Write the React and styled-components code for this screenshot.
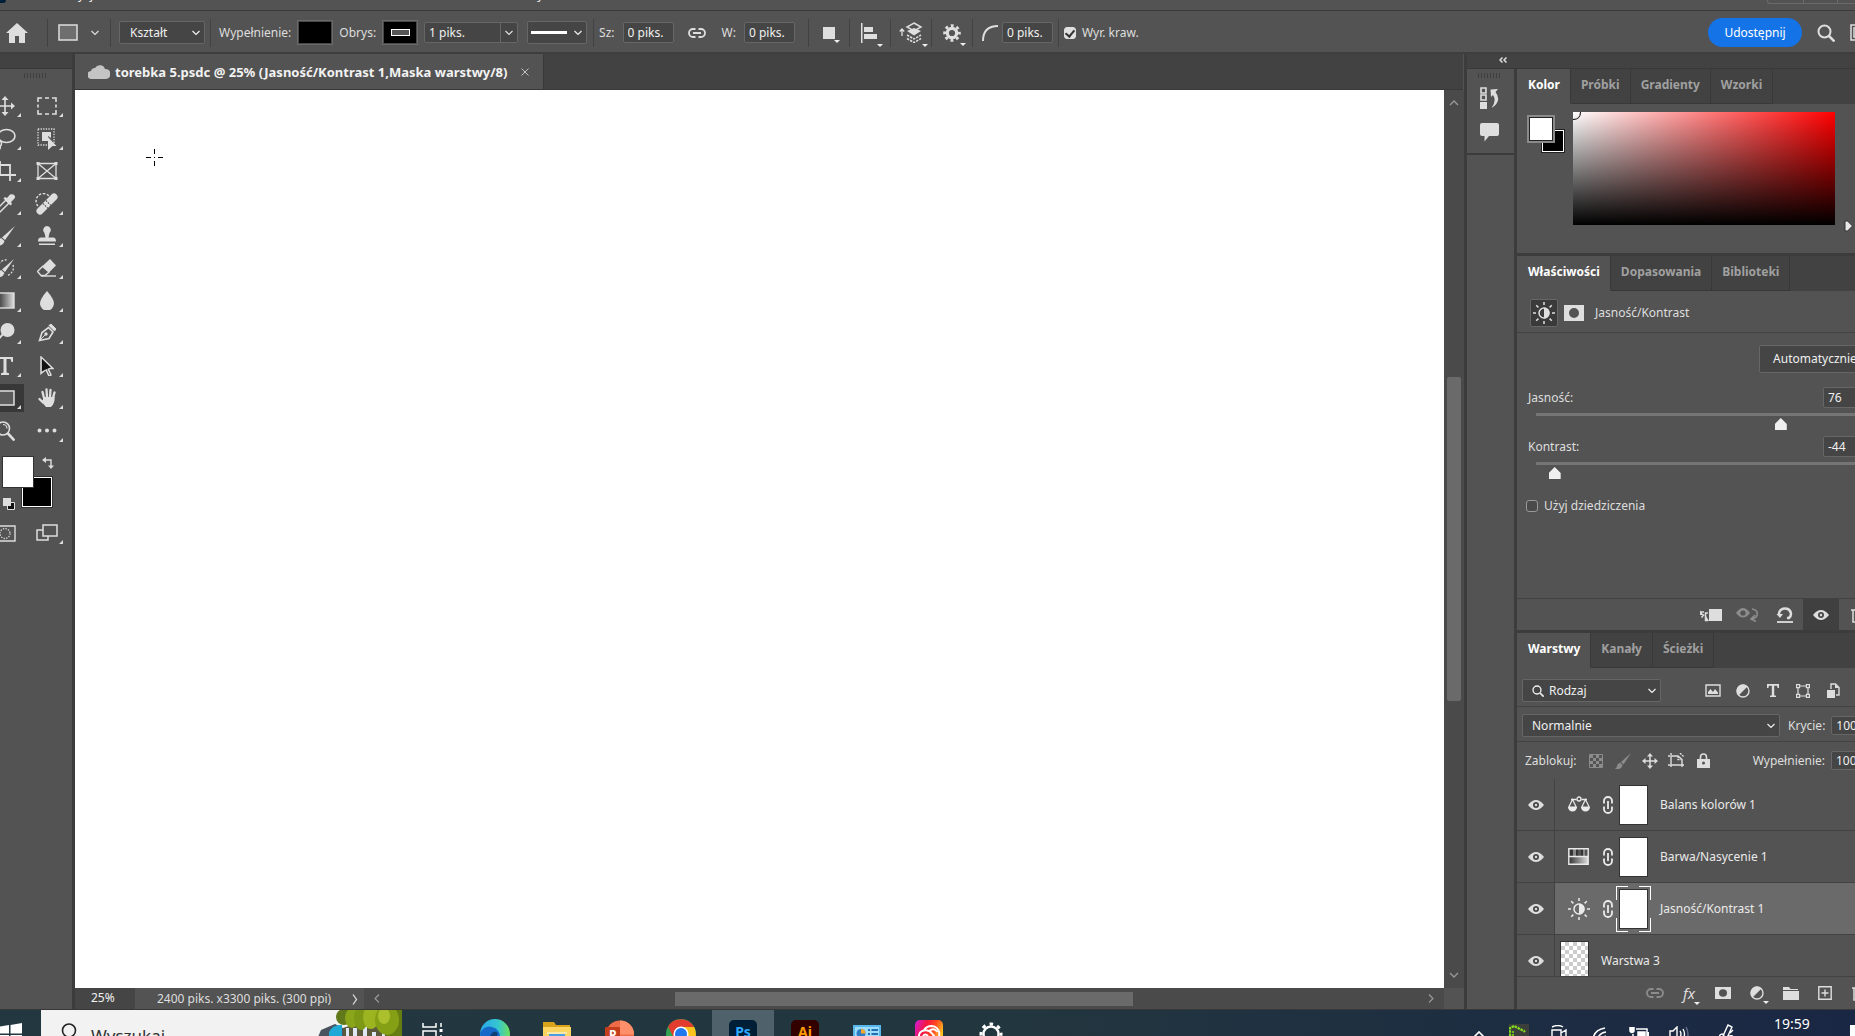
import styled, { createGlobalStyle, css } from "styled-components";

const GlobalStyle = createGlobalStyle`
  * {
    box-sizing: border-box;
  }
  body {
    margin: 0;
    background: #535353;
    overflow: hidden;
  }
  body, button, input, select {
    font-family: "Noto Sans", "Open Sans", sans-serif;
    font-size: 12px;
    line-height: 16px;
    color: #dedede;
  }
  button {
    background: none;
    border: 0;
    padding: 0;
  }
  svg {
    display: block;
    flex: none;
  }
`;

/* ---------- icons ---------- */

const line = { fill: "none", stroke: "currentColor" };

const icons = {
  home: [22, 20, <path d="M11 0 22 10h-3v10h-6v-7H9v7H3V10H0z" fill="currentColor" />],
  shape: [20, 17, <rect x="1" y="1" width="18" height="15" fill="#6e6e6e" stroke="currentColor" strokeWidth="1.5" />],
  chevron: [8, 6, <path d="m.5 1 3.500 3.500L7.500 1" {...line} strokeWidth="1.200" />],
  up: [10, 6, <path d="m1 5 4-4 4 4" {...line} strokeWidth="1.300" />],
  down: [10, 6, <path d="m1 1 4 4 4-4" {...line} strokeWidth="1.300" />],
  left: [6, 9, <path d="m5 .5-4 4 4 4" {...line} strokeWidth="1.200" />],
  right: [6, 9, <path d="m1 .5 4 4-4 4" {...line} strokeWidth="1.200" />],
  more: [6, 11, <path d="m1 .5 3.500 5L1 10.500" {...line} strokeWidth="1.300" />],
  collapse: [8, 6, <path d="M3.500.5 1 3l2.500 2.500M7.500.5 5 3l2.500 2.500" {...line} strokeWidth="1.500" />],
  link: [18, 10, <g {...line} strokeWidth="1.800"><path d="M7.500 1H5a4 4 0 0 0 0 8h2.500M10.500 1H13a4 4 0 0 1 0 8h-2.500M5 5h8" /></g>],
  linkV: [10, 18, <g {...line} strokeWidth="1.800"><path d="M1 7.500V5a4 4 0 0 1 8 0v2.500M1 10.500V13a4 4 0 0 0 8 0v-2.500M5 5v8" /></g>],
  square: [12, 12, <rect width="12" height="12" fill="currentColor" />],
  alignLeft: [17, 20, <path d="M0 0h1.500v20H0zM3 4h9v5H3zM3 11h13v5H3z" fill="currentColor" />],
  arrange: [24, 21, (
    <g>
      <path d="M3 14V8M.8 9.500 3 7l2.200 2.500" {...line} strokeWidth="1.300" />
      <path d="m15 1 7 4-7 4-7-4z" {...line} strokeWidth="1.500" />
      <path d="m8 9 7-3 7 3-7 4.500z" fill="currentColor" />
      <path d="m8 13 7 4 7-4M8 16.500l7 4 7-4" {...line} strokeWidth="1.500" strokeDasharray="2.500 1" />
    </g>
  )],
  gear: [18, 18, (
    <g {...line}>
      <circle cx="9" cy="9" r="4.700" strokeWidth="3.200" />
      <circle cx="9" cy="9" r="7.400" strokeWidth="2.800" strokeDasharray="2.900 2.912" strokeDashoffset="1.450" />
    </g>
  )],
  corner: [16, 16, <path d="M1 16C1 6 6 1 16 1" {...line} strokeWidth="2" />],
  search: [18, 18, <g {...line}><circle cx="7.500" cy="7.500" r="6" strokeWidth="2" /><path d="m12 12 5.500 5.500" strokeWidth="2.500" /></g>],
  frame: [18, 17, <path d="M1 1h16v15H1zM4 4h6v9H4z" {...line} strokeWidth="1.500" />],
  cloud: [22, 16, <path d="M4 15a4 4 0 0 1-1-8 4 4 0 0 1 4-3 5.500 5.500 0 0 1 10 1 5 5 0 0 1 1 10z" fill="currentColor" />],
  close: [8, 8, <path d="m.5.5 7 7m0-7-7 7" {...line} />],
  eye: [16, 10, (
    <g>
      <path d="M0 5q8-10 16 0Q8 15 0 5z" fill="currentColor" />
      <circle cx="8" cy="5" r="3" fill="#484848" />
      <circle cx="8" cy="5" r="1.200" fill="currentColor" />
    </g>
  )],
  brightness: [22, 22, (
    <g>
      <circle cx="11" cy="11" r="5" {...line} strokeWidth="1.500" />
      <path d="M11 5.500a5.500 5.500 0 0 1 0 11z" fill="currentColor" />
      <path d="M11 0v3M11 19v3M0 11h3M19 11h3M3.200 3.200l2.200 2.200M16.600 16.600l2.200 2.200M3.200 18.800l2.200-2.200M16.600 5.400l2.200-2.200" {...line} strokeWidth="1.500" />
    </g>
  )],
  mask: [20, 16, <path d="M0 0h20v16H0zM10 3a5 5 0 1 0 0 10 5 5 0 0 0 0-10z" fill="currentColor" fillRule="evenodd" />],
  clip: [23, 14, (
    <g>
      <path d="M10 1h13v12H10z" fill="currentColor" />
      <path d="M1 4h4M2.500 9.500 5 6.500M9 5H6.500v7.500H9" {...line} strokeWidth="1.500" />
      <path d="M1 7V2.500L4.500 7zM7 8l3 5H6z" fill="currentColor" />
    </g>
  )],
  previous: [23, 14, (
    <g>
      <path d="M0 5q7-10 14 0-7 9-14 0z" fill="currentColor" />
      <circle cx="7" cy="5" r="2.600" fill="#535353" />
      <path d="M16 1c7 1 7 8 0 10M19 7l-4 4 5 2.500" {...line} strokeWidth="1.600" />
    </g>
  )],
  reset: [18, 16, (
    <g {...line}>
      <path d="M3 7.500A6 5.500 0 1 1 13 11h-2" strokeWidth="2.500" />
      <path d="M1 15h16" strokeWidth="1.800" />
      <path d="M.5 7h6.500l-3 4z" fill="currentColor" stroke="none" />
    </g>
  )],
  trash: [14, 16, <path d="M0 3h14M5 3V1h4v2M2 3v12h10V3M5 6v7M9 6v7" {...line} strokeWidth="1.500" />],
  picture: [16, 13, (
    <g>
      <path d="M1 1h14v11H1z" {...line} strokeWidth="1.400" />
      <path d="M3 10V8l2.500-3 2.500 3 2-3 3 3.500V10z" fill="currentColor" />
    </g>
  )],
  adjust: [14, 14, (
    <g>
      <circle cx="7" cy="7" r="6" {...line} strokeWidth="1.400" />
      <path d="M2.500 11.500a6.300 6.300 0 0 1 0-9 6.300 6.300 0 0 1 9 0z" fill="currentColor" />
    </g>
  )],
  type: [12, 13, <path d="M0 0h12v4h-1.300L10 1.800H7.200v9.400l1.800.5V13H3v-1.300l1.800-.5V1.800H2L1.300 4H0z" fill="currentColor" />],
  vector: [14, 14, (
    <g {...line} strokeWidth="1.200">
      <path d="M2 2h10v10H2z" />
      <g fill="#535353"><path d="M.6.6h3v3h-3zM10.400.6h3v3h-3zM.6 10.400h3v3h-3zM10.400 10.400h3v3h-3z" /></g>
    </g>
  )],
  smart: [13, 15, (
    <g>
      <path d="M4 6V1h4.500L12 4.500V12H9" {...line} strokeWidth="1.400" />
      <path d="M8 1v4h4M0 7h8v8H0z" fill="currentColor" />
    </g>
  )],
  checker: [14, 14, (
    <g>
      <path d="M.5.5h13v13H.5z" {...line} />
      <path d="M1 1h3v3H1zM7 1h3v3H7zM4 4h3v3H4zM10 4h3v3h-3zM1 7h3v3H1zM7 7h3v3H7zM4 10h3v3H4zM10 10h3v3h-3z" fill="currentColor" />
    </g>
  )],
  smallBrush: [16, 16, <path d="M16 0 8.500 11.500 6 9zM5 9.500 7.500 12q-1 5-7.500 4 2-1 2.500-4.500z" fill="currentColor" />],
  move: [16, 16, (
    <g>
      <path d="M8 2v12M2 8h12" {...line} strokeWidth="1.500" />
      <path d="m8 0 3 3.500H5zM8 16l3-3.500H5zM0 8l3.500-3v6zM16 8l-3.500-3v6z" fill="currentColor" />
    </g>
  )],
  artboard: [17, 15, (
    <g {...line} strokeWidth="1.400">
      <path d="M3 3h7l4 3.500V12H3z" />
      <path d="M3 0v3M0 3h3M3 12v3M14 12v3M14 12h3M0 12h3M10 3v3.500h4M12 0l4 4" strokeDasharray="2 1" />
    </g>
  )],
  lock: [13, 15, (
    <g>
      <path d="M3.500 6V4a3 3 0 0 1 6 0v2" {...line} strokeWidth="1.600" />
      <path d="M0 6h13v9H0zM6.500 8.500a1.500 1.500 0 1 0 0 3 1.500 1.500 0 0 0 0-3z" fill="currentColor" fillRule="evenodd" />
    </g>
  )],
  balance: [22, 17, (
    <g>
      <path d="M3 3.500h5.500M13.500 3.500H19" {...line} strokeWidth="1.400" />
      <circle cx="11" cy="3" r="2" {...line} strokeWidth="1.300" />
      <path d="M4.500 3.500.8 11h7.400zM17.500 3.500 13.800 11h7.400z" {...line} strokeWidth="1.200" />
      <path d="M0 11h9a4.500 4.500 0 0 1-9 0zM13 11h9a4.500 4.500 0 0 1-9 0z" fill="currentColor" />
    </g>
  )],
  hue: [21, 17, (
    <g>
      <defs>
        <linearGradient id="hue"><stop stopColor="#333" /><stop offset="1" stopColor="#ddd" /></linearGradient>
      </defs>
      <path d="M1 9h19v7H1z" fill="url(#hue)" />
      <path d="M2 1h3v7H2zM8 1h2v7H8zM13 1h2v7h-2z" fill="#333" />
      <path d="M5 1h3v7H5zM15 1h2v7h-2z" fill="#888" />
      <path d="M.8.8h19.400v15.400H.8zM1 8.500h19" {...line} strokeWidth="1.400" />
    </g>
  )],
  folder: [16, 13, <path d="M0 0h6l1.500 2H15v1H0zM0 4h16v9H0z" fill="currentColor" />],
  plus: [14, 14, <path d="M.8.8h12.400v12.400H.8zM7 3.500v7M3.500 7h7" {...line} strokeWidth="1.400" />],
  history: [19, 22, (
    <g>
      <path d="M1 1h5v5H1zM1 8h5v5H1z" {...line} strokeWidth="1.600" />
      <path d="M0 15h7v7H0z" fill="currentColor" />
      <path d="M10.500 2.500 18 2l-2.500 3q7 9-4 16 5.500-8 1.500-13l-2 2z" fill="currentColor" />
    </g>
  )],
  comment: [19, 19, <path d="M2 0h15a2 2 0 0 1 2 2v9a2 2 0 0 1-2 2H9l-4.500 5.500V13H2a2 2 0 0 1-2-2V2a2 2 0 0 1 2-2z" fill="currentColor" />],

  // toolbox
  moveTool: [20, 20, (
    <g>
      <path d="M10 2v16M2 10h16" {...line} strokeWidth="1.600" />
      <path d="m10 0 3.500 4h-7zM10 20l3.500-4h-7zM0 10l4-3.500v7zM20 10l-4-3.500v7z" fill="currentColor" />
    </g>
  )],
  marquee: [20, 18, <path d="M1 5V1h4M8 1h4M15 1h4v4M19 7.500v3M19 13v4h-4M12 17H8M5 17H1v-4M1 10.500v-3" {...line} strokeWidth="1.600" />],
  lasso: [22, 22, (
    <g {...line} strokeWidth="1.600">
      <ellipse cx="12.500" cy="8" rx="8.500" ry="6.500" />
      <circle cx="5" cy="15.500" r="2.500" />
      <path d="M6 18q1 2-1 4" />
    </g>
  )],
  objectSelect: [20, 22, (
    <g>
      <path d="M1 1h16v16H1z" {...line} strokeWidth="1.300" strokeDasharray="1.300 1.300" />
      <path d="M5 4h9v6l-3-2v5H5z" fill="currentColor" />
      <path d="m11 9 8.500 9h-4l-4.500 4z" fill="currentColor" />
    </g>
  )],
  crop: [22, 20, <path d="M6 0v14h16M0 4h16v16" {...line} strokeWidth="1.800" />],
  frameTool: [22, 18, (
    <g>
      <path d="M2 1.500h18v15H2zM2 1.500l18 15M20 1.500l-18 15" {...line} strokeWidth="1.300" />
      <path d="M.5 0h3v3h-3zM18.500 0h3v3h-3zM.5 15h3v3h-3zM18.500 15h3v3h-3z" fill="currentColor" />
    </g>
  )],
  eyedropper: [20, 20, (
    <g>
      <path d="M1 19v-3L11 6l3 3L4 19z" {...line} strokeWidth="1.500" />
      <path d="m10 3 2 1 3-3.500q3-1 4.500 1T19 5l-3 3 1 2-1.500 1.500-7-7z" fill="currentColor" />
    </g>
  )],
  healing: [24, 22, (
    <g>
      <path d="M3 13A7 7 0 1 1 14 3" {...line} strokeWidth="1.400" strokeDasharray="2.500 1.500" />
      <path d="M5 18 19 4" {...line} strokeWidth="7" strokeLinecap="round" />
      <path d="m8 10.500 5.500 5.500M11 7.500 16.500 13" stroke="#535353" strokeWidth="1.200" strokeDasharray="1.500 1.200" />
    </g>
  )],
  brush: [20, 20, <path d="M20 0 10 14l-3-2.500zM6 12l3.500 3q-1.500 6-9.500 4.500 3-1 3-5z" fill="currentColor" />],
  stamp: [18, 20, <path d="M9 0a4 4 0 0 1 2.500 7l-1 4.500H15q3 0 3 4H0q0-4 3-4h4.500l-1-4.500A4 4 0 0 1 9 0zM1 17.500h16V19H1z" fill="currentColor" />],
  historyBrush: [22, 22, (
    <g>
      <path d="M20 2 11 15l-3-2.500zM7 13l3.500 3q-1.500 5-9.500 4.500 3-1 3-5z" fill="currentColor" />
      <path d="M5 7a8 8 0 0 1 8-4M19 8q2 7-6 11" {...line} strokeWidth="1.300" strokeDasharray="2 1.500" />
    </g>
  )],
  eraser: [20, 18, (
    <g>
      <path d="m13 0 6 6.500-7 7L5.500 7z" fill="currentColor" />
      <path d="m5.500 7.500-5 5L4 16.500h4L12 13z" {...line} strokeWidth="1.400" />
      <path d="M4 17h15" {...line} strokeWidth="1.400" />
    </g>
  )],
  gradient: [20, 17, (
    <g>
      <defs>
        <linearGradient id="ramp"><stop stopColor="#222" /><stop offset="1" stopColor="#ddd" /></linearGradient>
      </defs>
      <rect x="1" y="1" width="18" height="15" fill="url(#ramp)" stroke="currentColor" strokeWidth="1.400" />
    </g>
  )],
  drop: [14, 19, <path d="M7 0q7 8 7 12.500a6.800 6.800 0 0 1-14 0Q0 8 7 0z" fill="currentColor" />],
  dodge: [20, 20, (
    <g>
      <circle cx="12.500" cy="7" r="7" fill="currentColor" />
      <path d="m8 11-7 8" {...line} strokeWidth="2" />
    </g>
  )],
  pen: [18, 18, (
    <g>
      <path d="M1.500 16.500 4 8.500l6.500-5 4.500 4.500-4 6.500z" {...line} strokeWidth="1.600" />
      <path d="m11 1.500 2-1.500 5 5-1.500 2zM2 16l5-5" fill="currentColor" stroke="currentColor" />
      <circle cx="8" cy="10" r="1.700" fill="currentColor" />
    </g>
  )],
  typeTool: [16, 18, <path d="M0 0h16v5h-1.500L13.500 2H9.500v13.500l2.500.8V18H4v-1.700l2.500-.8V2h-4l-1 3H0z" fill="currentColor" />],
  arrow: [14, 20, (
    <g>
      <path d="m1 1 12 11.500H8l3 6.500-2 1-3-6.500-5 4z" {...line} strokeWidth="1.500" />
      <path d="m2 3 8.500 8.500L2 15z" fill="#111" />
    </g>
  )],
  rect: [20, 16, <path d="M1 1h18v14H1z" fill="#5c5c5c" stroke="currentColor" strokeWidth="1.500" />],
  hand: [19, 20, (
    <g {...line} strokeLinecap="round" strokeWidth="2.300">
      <path d="M6 10 4.500 4M9 9 8.500 1.500M12 9l.5-7M15 10l1.500-5.500M5 14.500 1.500 11" />
      <path d="M5 9h10.500l1-1q1 7-3.500 11H8l-5-6 2-1z" fill="currentColor" stroke="none" />
    </g>
  )],
  zoom: [20, 20, (
    <g {...line}>
      <circle cx="8" cy="7.500" r="6.500" strokeWidth="1.600" />
      <path d="M8 3.500a4 4 0 0 1 4 4" strokeWidth="1.200" />
      <path d="m12.500 12 7 7.500" strokeWidth="2.600" />
    </g>
  )],
  dots: [20, 5, <path d="M2.500.5a2 2 0 1 0 0 4 2 2 0 0 0 0-4zM10 .5a2 2 0 1 0 0 4 2 2 0 0 0 0-4zM17.500.5a2 2 0 1 0 0 4 2 2 0 0 0 0-4z" fill="currentColor" />],
  swap: [12, 12, (
    <g>
      <path d="M3 3h6v7" {...line} strokeWidth="1.400" />
      <path d="m0 3 4-3v6zM9 12 6 8.500h6z" fill="currentColor" />
    </g>
  )],
  defaults: [12, 12, (
    <g>
      <path d="M4.500 4.500h7v7h-7z" fill="#111" stroke="currentColor" />
      <path d="M0 0h8v8H0z" fill="currentColor" />
    </g>
  )],
  quickMask: [22, 17, (
    <g {...line}>
      <path d="M1 1h20v15H1z" strokeWidth="1.400" />
      <circle cx="11" cy="8.500" r="5" strokeWidth="1.300" strokeDasharray="1.300 1.300" />
    </g>
  )],
  screens: [22, 18, (
    <g fill="#535353" stroke="currentColor" strokeWidth="1.500">
      <path d="M1 6h11v10H1z" />
      <path d="M7 1h14v11H7z" />
    </g>
  )],
};

function Icon({ name }) {
  const [w, h, art] = icons[name];
  return (
    <svg width={w} height={h} viewBox={`0 0 ${w} ${h}`} aria-hidden="true">
      {art}
    </svg>
  );
}

/* ---------- data ---------- */

const tools = [
  ["moveTool", "marquee"],
  ["lasso", "objectSelect"],
  ["crop", "frameTool"],
  ["eyedropper", "healing"],
  ["brush", "stamp"],
  ["historyBrush", "eraser"],
  ["gradient", "drop"],
  ["dodge", "pen"],
  ["typeTool", "arrow"],
  ["rect", "hand"],
  ["zoom", "dots"],
];
const plainTools = ["frameTool", "zoom"];

const layers = [
  { name: "Balans kolorów 1", icon: "balance" },
  { name: "Barwa/Nasycenie 1", icon: "hue" },
  { name: "Jasność/Kontrast 1", icon: "brightness", selected: true },
  { name: "Warstwa 3" },
];

/* ---------- app ---------- */

export default function App() {
  return (
    <Page>
      <GlobalStyle />
      <MenuBar />
      <Options />
      <Workspace>
        <Toolbox />
        <Document />
        <Dock />
      </Workspace>
      <TaskBar />
    </Page>
  );
}

function MenuBar() {
  return (
    <MenuStrip>
      <AppMark />
      <MenuItem $left={58}>Edycja</MenuItem>
      <MenuItem $left={422}>Wtyczki</MenuItem>
      <WindowButtons>
        <i />
        <i />
        <i />
      </WindowButtons>
    </MenuStrip>
  );
}

function Select({ label, width, pad, icon, children }) {
  return (
    <SelectBox $width={width} $pad={pad}>
      {icon}
      <select aria-label={label}>{children}</select>
      <Icon name="chevron" />
    </SelectBox>
  );
}

function Options() {
  return (
    <OptionsBar>
      <HomeButton aria-label="Home"><Icon name="home" /></HomeButton>
      <Group $pad="0 11px 0 10px" $gap={13}>
        <Icon name="shape" />
        <Icon name="chevron" />
      </Group>
      <Group $pad="0 5px 0 8px">
        <Select label="Tryb" width="86px" pad={10}><option>Kształt</option></Select>
      </Group>
      <Group $pad="0 6px 0 8px" $gap={6}>
        <Label>Wypełnienie:</Label>
        <Swatch aria-label="Wypełnienie" />
        <Label>Obrys:</Label>
        <Swatch aria-label="Obrys"><b /></Swatch>
        <Combo>
          <input aria-label="Grubość" defaultValue="1 piks." />
          <button aria-label="Lista"><Icon name="chevron" /></button>
        </Combo>
        <LineButton aria-label="Linia"><b /><Icon name="chevron" /></LineButton>
      </Group>
      <Group $pad="0 13px 0 5px" $gap={8}>
        <Label htmlFor="w">Sz:</Label>
        <Field id="w" defaultValue="0 piks." />
        <LinkButton aria-label="Link"><Icon name="link" /></LinkButton>
        <Label htmlFor="h">W:</Label>
        <Field id="h" defaultValue="0 piks." />
      </Group>
      {["square", "alignLeft", "arrange", "gear"].map((name) => (
        <Group key={name}>
          <MenuButton aria-label={name}><Icon name={name} /></MenuButton>
        </Group>
      ))}
      <Group $pad="0 5px 0 9px" $gap={4}>
        <Icon name="corner" />
        <Field aria-label="Promień" defaultValue="0 piks." />
      </Group>
      <Group $pad="0 5px">
        <CheckLabel>
          <CheckBox type="checkbox" defaultChecked />
          Wyr. kraw.
        </CheckLabel>
      </Group>
      <ShareArea>
        <ShareButton>Udostępnij</ShareButton>
        <button aria-label="Szukaj"><Icon name="search" /></button>
        <button aria-label="Obszar roboczy"><Icon name="frame" /></button>
      </ShareArea>
    </OptionsBar>
  );
}

function Toolbox() {
  return (
    <ToolColumn>
      <ToolHeader />
      <Grip />
      <ToolGrid>
        {tools.flat().map((name) => (
          <ToolCell key={name}>
            <Tool aria-label={name} $on={name === "rect"} $more={!plainTools.includes(name)}>
              <Icon name={name} />
            </Tool>
          </ToolCell>
        ))}
      </ToolGrid>
      <ColorPair>
        <BackColor />
        <FrontColor />
        <SwapButton aria-label="Zamień"><Icon name="swap" /></SwapButton>
        <DefaultButton aria-label="Domyślne"><Icon name="defaults" /></DefaultButton>
      </ColorPair>
      <ModeGrid>
        <ToolCell><Tool aria-label="Maska"><Icon name="quickMask" /></Tool></ToolCell>
        <ToolCell><Tool aria-label="Ekran" $more><Icon name="screens" /></Tool></ToolCell>
      </ModeGrid>
    </ToolColumn>
  );
}

function Document() {
  return (
    <DocumentArea>
      <TabStrip>
        <DocTab>
          <Icon name="cloud" />
          <span>torebka 5.psdc @ 25% (Jasność/Kontrast 1,Maska warstwy/8)</span>
          <button aria-label="Zamknij"><Icon name="close" /></button>
        </DocTab>
      </TabStrip>
      <CanvasRow>
        <Canvas>
          <Crosshair width="17" height="17" viewBox="0 0 17 17">
            <path d="M8.500 0v5M8.500 12v5M0 8.500h5M12 8.500h5M8 8.500h1" stroke="#000" />
          </Crosshair>
        </Canvas>
        <VScroll>
          <Icon name="up" />
          <i />
          <Icon name="down" />
        </VScroll>
      </CanvasRow>
      <StatusRow>
        <ZoomField aria-label="Powiększenie" defaultValue="25%" />
        <DocInfo>
          <span>2400 piks. x3300 piks. (300 ppi)</span>
          <Icon name="more" />
        </DocInfo>
        <HScroll>
          <Icon name="left" />
          <i />
          <Icon name="right" />
        </HScroll>
        <ScrollCorner />
      </StatusRow>
    </DocumentArea>
  );
}

function Tabs({ names }) {
  return (
    <PanelTabs role="tablist">
      {names.map((name, i) => (
        <PanelTab key={name} role="tab" aria-selected={i === 0} $on={i === 0}>{name}</PanelTab>
      ))}
    </PanelTabs>
  );
}

function Dock() {
  return (
    <DockArea>
      <DockHeader><Icon name="collapse" /></DockHeader>
      <IconStrip>
        <IconStack>
          <Grip />
          <button aria-label="Historia"><Icon name="history" /></button>
          <button aria-label="Komentarze"><Icon name="comment" /></button>
        </IconStack>
      </IconStrip>
      <Panels>
        <ColorPanel />
        <PropertiesPanel />
        <LayersPanel />
      </Panels>
    </DockArea>
  );
}

function ColorPanel() {
  return (
    <Panel>
      <Tabs names={["Kolor", "Próbki", "Gradienty", "Wzorki"]} />
      <ColorBody>
        <MiniPair>
          <MiniBack />
          <MiniFront />
        </MiniPair>
        <ColorField>
          <svg width="9" height="9" viewBox="0 0 9 9">
            <path d="M7.500 0q0 7.500-7.500 7.500" fill="none" stroke="#000" />
          </svg>
        </ColorField>
        <HuePointer width="9" height="12" viewBox="0 0 9 12">
          <path d="M1 1h2.500l5 5-5 5H1z" fill="#e8e8e8" stroke="#333" />
        </HuePointer>
      </ColorBody>
    </Panel>
  );
}

function SliderRow({ id, label, value, min, max }) {
  return (
    <SliderBlock>
      <div>
        <Label htmlFor={id}>{label}</Label>
        <Field aria-label={label} defaultValue={value} />
      </div>
      <Range id={id} type="range" min={min} max={max} defaultValue={value} />
    </SliderBlock>
  );
}

function PropertiesPanel() {
  return (
    <Panel>
      <Tabs names={["Właściwości", "Dopasowania", "Biblioteki"]} />
      <PropHeader>
        <SquareButton aria-label="Dopasowanie"><Icon name="brightness" /></SquareButton>
        <button aria-label="Maska"><Icon name="mask" /></button>
        <Label as="span">Jasność/Kontrast</Label>
      </PropHeader>
      <PropBody>
        <AutoButton>Automatycznie</AutoButton>
        <SliderRow id="brightness" label="Jasność:" value="76" min="-150" max="150" />
        <SliderRow id="contrast" label="Kontrast:" value="-44" min="-50" max="100" />
        <CheckLabel>
          <CheckBox type="checkbox" />
          Użyj dziedziczenia
        </CheckLabel>
      </PropBody>
      <PropFooter>
        <FootButton aria-label="Przytnij"><Icon name="clip" /></FootButton>
        <FootButton aria-label="Poprzedni stan" $dim><Icon name="previous" /></FootButton>
        <FootButton aria-label="Resetuj"><Icon name="reset" /></FootButton>
        <FootButton aria-label="Widoczność" $on><Icon name="eye" /></FootButton>
        <FootButton aria-label="Usuń"><Icon name="trash" /></FootButton>
      </PropFooter>
    </Panel>
  );
}

function LayersPanel() {
  return (
    <Panel $grow>
      <Tabs names={["Warstwy", "Kanały", "Ścieżki"]} />
      <FilterRow>
        <Select label="Filtr" width="139px" pad={9} icon={<svg width="12" height="12" viewBox="0 0 18 18">{icons.search[2]}</svg>}>
          <option>Rodzaj</option>
        </Select>
        <FilterIcons>
          {["picture", "adjust", "type", "vector", "smart"].map((name) => (
            <button key={name} aria-label={name}><Icon name={name} /></button>
          ))}
        </FilterIcons>
      </FilterRow>
      <BlendRow>
        <Select label="Mieszanie" width="258px" pad={9}><option>Normalnie</option></Select>
        <Label htmlFor="opacity">Krycie:</Label>
        <Field id="opacity" defaultValue="100%" $low />
      </BlendRow>
      <LockRow>
        <Label as="span">Zablokuj:</Label>
        <LockIcons>
          <Dim aria-label="Przezroczystość"><Icon name="checker" /></Dim>
          <Dim aria-label="Piksele"><Icon name="smallBrush" /></Dim>
          <button aria-label="Położenie"><Icon name="move" /></button>
          <button aria-label="Obszar"><Icon name="artboard" /></button>
          <button aria-label="Wszystko"><Icon name="lock" /></button>
        </LockIcons>
        <Label htmlFor="fill">Wypełnienie:</Label>
        <Field id="fill" defaultValue="100%" $low />
      </LockRow>
      <LayerList>
        {layers.map((layer) => (
          <Layer key={layer.name}>
            <EyeCell aria-label="Widoczność"><Icon name="eye" /></EyeCell>
            {layer.icon ? (
              <LayerBody $on={layer.selected}>
                <LayerIcon><Icon name={layer.icon} /></LayerIcon>
                <Icon name="linkV" />
                <Thumb $on={layer.selected} />
                <span>{layer.name}</span>
              </LayerBody>
            ) : (
              <LayerBody $plain>
                <Thumb $checker />
                <span>{layer.name}</span>
              </LayerBody>
            )}
          </Layer>
        ))}
      </LayerList>
      <LayersFooter>
        <Dim aria-label="Połącz"><Icon name="link" /></Dim>
        <MenuButton aria-label="Styl"><Fx>fx</Fx></MenuButton>
        <button aria-label="Dodaj maskę"><svg width="16" height="12" viewBox="0 0 20 16" preserveAspectRatio="none">{icons.mask[2]}</svg></button>
        <MenuButton aria-label="Warstwa dopasowania"><Icon name="adjust" /></MenuButton>
        <button aria-label="Grupa"><Icon name="folder" /></button>
        <button aria-label="Nowa warstwa"><Icon name="plus" /></button>
        <button aria-label="Usuń warstwę"><Icon name="trash" /></button>
      </LayersFooter>
    </Panel>
  );
}

function TaskBar() {
  return (
    <TaskStrip>
      <StartButton aria-label="Start">
        <svg width="22" height="22" viewBox="0 0 22 22">
          <path d="M0 3.500 9 2v8.500H0zM10.500 2 22 0v10.500H10.500zM0 12h9v8.500L0 19zM10.500 12H22v10l-11.500-2z" fill="#fff" />
        </svg>
      </StartButton>
      <SearchBox>
        <svg width="20" height="22" viewBox="0 0 20 22">
          <circle cx="8" cy="7.500" r="6.500" fill="none" stroke="#222" strokeWidth="1.600" />
          <path d="m4 13-4 7" stroke="#222" strokeWidth="1.600" />
        </svg>
        <input aria-label="Wyszukaj" placeholder="Wyszukaj" />
        <Landscape />
      </SearchBox>
      <TaskButton aria-label="Widok zadań">
        <svg width="22" height="22" viewBox="0 0 22 22" fill="none" stroke="#fff" strokeWidth="1.500">
          <path d="M1 0v4h13V0M1 8h13v9H1zM1 21v-2h13v2M19 0v4M19 12v9" />
          <path d="M17.500 6h3v3h-3z" fill="#fff" stroke="none" />
        </svg>
      </TaskButton>
      <TaskButton aria-label="Edge">
        <svg width="30" height="30" viewBox="0 0 30 30">
          <defs>
            <linearGradient id="edgeTop"><stop stopColor="#2aa7e8" /><stop offset=".6" stopColor="#35c6d0" /><stop offset="1" stopColor="#6ee05a" /></linearGradient>
          </defs>
          <circle cx="15" cy="15" r="15" fill="url(#edgeTop)" />
          <path d="M0 14Q5 6 12 8t8 9l-6 11Q1 27 0 14z" fill="#1469c9" />
          <path d="M12 14q4-3 6 1-3 3-1 7l-5 2q-4-5 0-10z" fill="#0f3f75" />
        </svg>
      </TaskButton>
      <TaskButton aria-label="Eksplorator plików">
        <svg width="28" height="24" viewBox="0 0 28 24">
          <path d="M0 0h11l2 3h14v4H0z" fill="#d9a21b" />
          <path d="M0 5h28v19H0z" fill="#fcd462" />
          <path d="M6 12h16v12H6z" fill="#4b9fe0" />
          <path d="M4 10h20v2H4z" fill="#fbe7a6" />
        </svg>
      </TaskButton>
      <TaskButton aria-label="PowerPoint">
        <svg width="29" height="29" viewBox="0 0 29 29">
          <circle cx="15" cy="14.500" r="14" fill="#ed6c47" />
          <path d="M15 .5a14 14 0 0 1 14 14H15z" fill="#ff8f6b" />
          <rect y="7" width="15" height="15" rx="1" fill="#c43e1c" />
          <text x="4" y="19" fontSize="12" fontWeight="700" fill="#fff">P</text>
        </svg>
      </TaskButton>
      <TaskButton aria-label="Chrome">
        <svg width="30" height="30" viewBox="0 0 30 30">
          <circle cx="15" cy="15" r="15" fill="#31a350" />
          <path d="M2 7.500A15 15 0 0 1 28 8H15L8 19z" fill="#e23c2f" />
          <path d="M15 8h13.200A15 15 0 0 1 15 30l7-12z" fill="#fcc31c" />
          <circle cx="15" cy="15" r="7.500" fill="#fff" />
          <circle cx="15" cy="15" r="6" fill="#1f78ee" />
        </svg>
      </TaskButton>
      <TaskButton aria-label="Photoshop" $on><AppTile $bg="#001e36" $fg="#31a8ff">Ps</AppTile></TaskButton>
      <TaskButton aria-label="Illustrator"><AppTile $bg="#330000" $fg="#ff9a00">Ai</AppTile></TaskButton>
      <TaskButton aria-label="Panel sterowania">
        <svg width="28" height="18" viewBox="0 0 28 18">
          <path d="M0 0h28v18H0z" fill="#57b6ea" />
          <path d="M2 2h24v14H2z" fill="#9edcfb" />
          <circle cx="8" cy="8.500" r="4.500" fill="#2b7cc4" />
          <path d="M8 8.500V4a4.500 4.500 0 0 1 4.500 4.500z" fill="#f7a62b" />
          <path d="M15 4h2v2h-2zM18.500 4H25v2h-6.500zM15 8h2v2h-2zM18.500 8H25v2h-6.500zM15 12h10v2H15z" fill="#1f6fb2" />
        </svg>
      </TaskButton>
      <TaskButton aria-label="Creative Cloud">
        <svg width="28" height="28" viewBox="0 0 28 28">
          <defs>
            <linearGradient id="cc" x2="1" y2=".4"><stop stopColor="#d01ce0" /><stop offset=".4" stopColor="#f5163e" /><stop offset=".7" stopColor="#ff4a1f" /><stop offset="1" stopColor="#ffc21f" /></linearGradient>
          </defs>
          <rect width="28" height="28" rx="5" fill="url(#cc)" />
          <g fill="none" stroke="#fff" strokeWidth="2">
            <path d="M10 21.500a5.500 5.500 0 0 1-1-11q5-1 8 3l5 6" />
            <path d="M9 10.500Q11 6 17 6a8 8 0 0 1 2 15.500h-9" />
            <path d="M13 16q-3-3-5 0M14 11q5-4 8.500 1" />
          </g>
        </svg>
      </TaskButton>
      <TaskButton aria-label="Ustawienia">
        <svg width="24" height="24" viewBox="0 0 24 24" fill="none" stroke="#fff">
          <circle cx="12" cy="12" r="7.500" strokeWidth="2.400" />
          <circle cx="12" cy="12" r="10" strokeWidth="3" strokeDasharray="3.500 4.350" strokeDashoffset="1.700" />
        </svg>
      </TaskButton>
      <Tray />
    </TaskStrip>
  );
}

function Landscape() {
  return (
    <svg width="87" height="48" viewBox="0 0 87 48">
      <path d="M0 34 6 20l14-6 12 6v28H0z" fill="#48535f" />
      <path d="M14 48V22q4-8 13-7v33z" fill="#1ea9d6" />
      <path d="M28 48V18l12-4 16-2 31 4v32z" fill="#5b5a3c" />
      <path d="M31 18h3v12h-3zM38 18h4v20h-4zM48 16h4v24h-4zM57 22h4v22h-4zM67 20h3v20h-3zM76 26h3v18h-3z" fill="#dfe8f5" />
      <path d="M62 0h25v28q-12 4-18-6z" fill="#667d12" />
      <ellipse cx="29" cy="7" rx="8" ry="8" fill="#62791b" />
      <ellipse cx="37" cy="8" rx="7" ry="10" fill="#8ba51a" />
      <ellipse cx="46" cy="8" rx="7" ry="12" fill="#7d9814" />
      <ellipse cx="56" cy="7" rx="8" ry="12" fill="#9cb420" />
      <ellipse cx="72" cy="10" rx="12" ry="15" fill="#86a015" />
      <ellipse cx="69" cy="6" rx="6" ry="8" fill="#abc02c" />
    </svg>
  );
}

function Tray() {
  return (
    <TrayArea>
      <svg width="12" height="7" viewBox="0 0 12 7"><path d="m1 6 5-5 5 5" fill="none" stroke="#fff" strokeWidth="1.600" /></svg>
      <svg width="20" height="20" viewBox="0 0 20 20">
        <path d="M0 0h20v20H0z" fill="#3b3f3c" />
        <path d="M1 12V4l4-2 10 5 1 1" fill="none" stroke="#84e01c" strokeWidth="2.200" strokeDasharray="2.500 .8" />
        <path d="M4 12V6" stroke="#84e01c" strokeWidth="1.500" strokeDasharray="2 1" />
      </svg>
      <svg width="16" height="18" viewBox="0 0 16 18" fill="none" stroke="#fff" strokeWidth="1.400">
        <path d="M1 2q6-3 11 0M1 5h9v11H1zM10 8l5-3v9l-5-2" />
      </svg>
      <svg width="16" height="14" viewBox="0 0 16 14" fill="none" stroke="#fff" strokeWidth="1.500">
        <path d="M2 12Q3 3 14 1" /><path d="M6 13q2-7 9-8M10 14q2-4 5-5" />
      </svg>
      <svg width="20" height="14" viewBox="0 0 20 14" fill="none" stroke="#fff" strokeWidth="1.500">
        <path d="M7 2h11v10H4V7M19.300 5v4" /><path d="M1 0v4q2 3 4 0V0M9 5h7v4H9z" fill="#fff" />
      </svg>
      <svg width="20" height="16" viewBox="0 0 20 16" fill="none" stroke="#fff" strokeWidth="1.400">
        <path d="M1 5h3l4-4v14l-4-4H1zM11 5q2 3 0 6M14 3q3 5 0 10" /><path d="M17 1q4 7 0 14" stroke="#66718a" />
      </svg>
      <svg width="16" height="20" viewBox="0 0 16 20" fill="none" stroke="#fff" strokeWidth="1.400">
        <path d="m4 12 5-11 4 2-5 11M11 9l3-3M0 12q4-4 5 0t4 1q4-3 6 1" />
      </svg>
      <time>19:59</time>
      <svg width="14" height="18" viewBox="0 0 14 18"><path d="M0 0h14v14H6l-3 4v-4H0z" fill="#fff" /></svg>
    </TrayArea>
  );
}

/* ---------- shared pieces ---------- */

const fieldSkin = css`
  background: #454545;
  border: 1px solid #666;
  border-radius: 2px;
  color: #f0f0f0;
`;

const Label = styled.label`
  white-space: nowrap;
`;

const Field = styled.input`
  ${fieldSkin}
  width: 51px;
  height: ${({ $low }) => ($low ? 19 : 21)}px;
  padding: 0 4px;
  flex: none;
`;

const SelectBox = styled.span`
  ${fieldSkin}
  width: ${({ $width }) => $width};
  height: 23px;
  display: flex;
  align-items: center;
  gap: 5px;
  flex: none;
  padding: 0 4px 0 ${({ $pad }) => $pad}px;

  select {
    appearance: none;
    flex: 1;
    min-width: 0;
    border: 0;
    padding: 0;
    background: #454545;
    color: #f0f0f0;
  }
`;

const CheckLabel = styled.label`
  display: flex;
  align-items: center;
  gap: 6px;
  white-space: nowrap;
`;

const CheckBox = styled.input`
  appearance: none;
  width: 12px;
  height: 12px;
  margin: 0;
  border: 1px solid #999;
  border-radius: 3px;
  background: #4a4a4a;
  display: grid;
  place-items: center;

  &:checked {
    background: #e0e0e0;
    border-color: #e0e0e0;
  }
  &:checked::after {
    content: "";
    width: 4px;
    height: 7px;
    border: solid #333;
    border-width: 0 2px 2px 0;
    transform: rotate(40deg);
  }
`;

const MenuButton = styled.button`
  position: relative;
  display: grid;
  place-items: center;

  &::after {
    content: "";
    position: absolute;
    right: -5px;
    bottom: -4px;
    border: solid transparent;
    border-width: 3px 3px 0;
    border-top-color: #eee;
  }
`;

const Grip = styled.div`
  width: 24px;
  height: 5px;
  margin: 0 auto;
  background: repeating-linear-gradient(90deg, #3f3f3f 0 1px, #535353 1px 3px);
`;

/* ---------- frame ---------- */

const Page = styled.div`
  height: 100vh;
  display: flex;
  flex-direction: column;
  background: #535353;
  overflow: hidden;
`;

const MenuStrip = styled.div`
  height: 11px;
  flex: none;
  display: flex;
  align-items: flex-start;
  border-bottom: 1px solid #3a3a3a;
  overflow: hidden;
`;

const AppMark = styled.span`
  width: 6px;
  height: 3px;
  background: #001e36;
  border-bottom-right-radius: 3px;
`;

const MenuItem = styled.button`
  margin: -13px 0 0 ${({ $left }) => $left}px;
  color: #eee;
`;

const WindowButtons = styled.div`
  margin-left: auto;
  display: grid;
  grid-template-columns: 35px 34px 18px;
  height: 4px;
  border: solid #6a6a6a;
  border-width: 0 0 1px 1px;
  border-bottom-left-radius: 3px;

  i + i {
    border-left: 1px solid #6a6a6a;
  }
`;

const OptionsBar = styled.header`
  height: 43px;
  flex: none;
  display: flex;
  align-items: center;
  padding-top: 2px;
  border-bottom: 2px solid #3e3e3e;
  overflow: hidden;
`;

const HomeButton = styled.button`
  width: 47px;
  padding-right: 14px;
  display: flex;
  justify-content: center;
`;

const Group = styled.div`
  height: 28px;
  min-width: 41px;
  display: flex;
  align-items: center;
  justify-content: center;
  flex: none;
  gap: ${({ $gap = 0 }) => $gap}px;
  padding: ${({ $pad = "0" }) => $pad};
  border-left: 1px solid #424242;
`;

const Swatch = styled.button`
  width: 36px;
  height: 25px;
  flex: none;
  display: grid;
  place-items: center;
  background: #000;
  border: 1px solid #6a6a6a;
  box-shadow: inset 0 0 0 1px #484848;

  b {
    width: 19px;
    height: 7px;
    background: #555;
    border: 1px solid #fff;
  }
`;

const Combo = styled.span`
  ${fieldSkin}
  height: 21px;
  width: 94px;
  display: flex;

  input {
    width: 76px;
    padding: 0 4px;
    border: 0;
    border-right: 1px solid #666;
    background: none;
    color: #f0f0f0;
  }
  button {
    flex: 1;
    display: grid;
    place-items: center;
  }
`;

const LineButton = styled.button`
  ${fieldSkin}
  width: 60px;
  height: 23px;
  margin-left: 3px;
  display: flex;
  align-items: center;
  justify-content: space-between;
  padding: 0 4px 0 3px;

  b {
    width: 36px;
    height: 3px;
    background: #fff;
  }
`;

const LinkButton = styled.button`
  margin: 0 8px 0 6px;
`;

const ShareArea = styled.div`
  display: flex;
  align-items: center;
  gap: 15px;
  margin: 0 -13px 0 auto;
`;

const ShareButton = styled.button`
  width: 94px;
  height: 29px;
  border-radius: 15px;
  background: #1473e6;
  color: #fff;
`;

const Workspace = styled.main`
  flex: 1;
  min-height: 0;
  display: grid;
  grid-template-columns: 75px minmax(0, 1fr) 391px;
  border-bottom: 1px solid #383838;
`;

/* ---------- toolbox ---------- */

const ToolColumn = styled.aside`
  border-right: 3px solid #3c3c3c;
  overflow: hidden;
`;

const ToolHeader = styled.div`
  height: 15px;
  margin-bottom: 4px;
  background: #424242;
  border-bottom: 1px solid #3a3a3a;
`;

const ToolGrid = styled.div`
  display: grid;
  grid-template-columns: 42px 42px;
  grid-template-rows: repeat(11, 1fr);
  height: 357px;
  margin: 12px 0 0 -16px;
`;

const ToolCell = styled.div`
  display: grid;
  place-items: center;
`;

const Tool = styled.button`
  position: relative;
  width: 38px;
  height: 28px;
  display: grid;
  place-items: center;
  background: ${({ $on }) => ($on ? "#383838" : "none")};

  ${({ $more }) =>
    $more &&
    css`
      &::after {
        content: "";
        position: absolute;
        right: 3px;
        bottom: 3px;
        border: 2px solid #ddd;
        border-top-color: transparent;
        border-left-color: transparent;
      }
    `};
`;

const ColorPair = styled.div`
  position: relative;
  height: 56px;
  margin-top: 8px;
`;

const FrontColor = styled.button`
  position: absolute;
  left: 2px;
  top: 1px;
  width: 32px;
  height: 32px;
  background: #fff;
  border: 1px solid #333;
`;

const BackColor = styled(FrontColor)`
  left: 21px;
  top: 21px;
  background: #000;
  box-shadow: inset 0 0 0 1px #fff;
`;

const SwapButton = styled.button`
  position: absolute;
  left: 42px;
  top: 2px;
`;

const DefaultButton = styled.button`
  position: absolute;
  left: 3px;
  top: 43px;
`;

const ModeGrid = styled.div`
  display: grid;
  grid-template-columns: 42px 42px;
  margin: 8px 0 0 -16px;
`;

/* ---------- document ---------- */

const DocumentArea = styled.section`
  display: flex;
  flex-direction: column;
  min-width: 0;
`;

const TabStrip = styled.div`
  height: 36px;
  flex: none;
  background: #424242;
  border-bottom: 1px solid #383838;
  margin-right: 1px;
`;

const DocTab = styled.div`
  display: inline-flex;
  align-items: center;
  height: 35px;
  padding: 0 14px 0 13px;
  background: #535353;
  border-right: 1px solid #383838;
  font-weight: 700;
  font-size: 13px;
  color: #f2f2f2;
  white-space: nowrap;

  span {
    margin: 0 14px 0 5px;
  }
  svg:first-child {
    color: #c4c4c4;
  }
`;

const CanvasRow = styled.div`
  flex: 1;
  display: flex;
`;

const Canvas = styled.div`
  flex: 1;
  position: relative;
  background: #fff;
`;

const Crosshair = styled.svg`
  position: absolute;
  left: 71px;
  top: 59px;
`;

const VScroll = styled.div`
  width: 20px;
  display: grid;
  grid-template-rows: 26px 261fr 324fr 261fr 26px;
  justify-items: center;
  align-items: center;
  background: #4a4a4a;
  color: #999;

  i {
    grid-row: 3;
    align-self: stretch;
    width: 14px;
    border-radius: 2px;
    background: #6a6a6a;
  }
  svg:last-child {
    grid-row: 5;
  }
`;

const StatusRow = styled.footer`
  height: 21px;
  display: flex;
`;

const ZoomField = styled.input`
  width: 60px;
  border: 0;
  padding: 0 0 2px 16px;
  background: #454545;
  color: #f0f0f0;
`;

const DocInfo = styled.div`
  width: 229px;
  display: flex;
  align-items: center;
  justify-content: space-between;
  padding: 1px 6px 0 22px;
  white-space: nowrap;
`;

const HScroll = styled.div`
  flex: 1;
  display: grid;
  grid-template-columns: 26px 286fr 459fr 286fr 26px;
  justify-items: center;
  align-items: center;
  background: #4a4a4a;
  color: #999;

  i {
    grid-column: 3;
    justify-self: stretch;
    height: 14px;
    background: #6a6a6a;
  }
  svg:last-child {
    grid-column: 5;
  }
`;

const ScrollCorner = styled.div`
  width: 20px;
`;

/* ---------- dock ---------- */

const DockArea = styled.aside`
  display: grid;
  grid-template-columns: 50px minmax(0, 1fr);
  grid-template-rows: 15px minmax(0, 1fr);
  border-left: 3px solid #3c3c3c;
  min-height: 0;
`;

const DockHeader = styled.div`
  grid-column: 1 / -1;
  background: #424242;
  border-bottom: 1px solid #383838;
  padding: 3px 0 0 32px;
`;

const IconStrip = styled.div`
  border-right: 3px solid #3c3c3c;
`;

const IconStack = styled.div`
  display: flex;
  flex-direction: column;
  align-items: center;
  height: 86px;
  padding: 4px 2px 0 0;
  border-bottom: 2px solid #3c3c3c;

  button {
    margin-top: 9px;
  }
  button + button {
    margin-top: 14px;
  }
`;

const Panels = styled.div`
  display: flex;
  flex-direction: column;
  min-height: 0;
  overflow: hidden;
`;

const Panel = styled.section`
  width: 374px;
  display: flex;
  flex-direction: column;
  border-bottom: ${({ $grow }) => ($grow ? 0 : 3)}px solid #3c3c3c;
  ${({ $grow }) => $grow && "flex: 1; min-height: 0;"}
`;

const PanelTabs = styled.div`
  height: 35px;
  flex: none;
  display: flex;
  background: #424242;
`;

const PanelTab = styled.button`
  padding: 0 10px 2px;
  font-weight: 700;
  color: #a0a0a0;
  border: solid #383838;
  border-width: 0 1px 1px 0;

  ${({ $on }) =>
    $on &&
    css`
      padding-left: 11px;
      background: #535353;
      color: #fff;
      border-bottom-color: #535353;
    `};
`;

const ColorBody = styled.div`
  height: 149px;
  padding: 8px 0 0 10px;
  display: flex;
  align-items: flex-start;
`;

const MiniPair = styled.div`
  position: relative;
  width: 46px;
  height: 40px;
  margin-top: 3px;
  flex: none;
`;

const MiniFront = styled.button`
  position: absolute;
  left: 0;
  top: 0;
  width: 28px;
  height: 28px;
  background: #fff;
  border: 2px solid #8a8a8a;
  box-shadow: inset 0 0 0 1px #222;
`;

const MiniBack = styled(MiniFront)`
  left: 14px;
  top: 14px;
  width: 24px;
  height: 24px;
  background: #000;
  border: 1px solid #222;
  box-shadow: inset 0 0 0 1px #fff;
`;

const ColorField = styled.div`
  width: 262px;
  height: 113px;
  background: linear-gradient(transparent, #000), linear-gradient(90deg, #fff, #f00);
`;

const HuePointer = styled.svg`
  margin: 108px 0 0 9px;
`;

const PropHeader = styled.div`
  height: 42px;
  display: flex;
  align-items: center;
  gap: 6px;
  padding: 2px 0 0 13px;
  border-bottom: 1px solid #424242;

  span {
    margin-left: 5px;
  }
`;

const SquareButton = styled.button`
  width: 28px;
  height: 28px;
  display: grid;
  place-items: center;
  background: #3a3a3a;
  border: 1px solid #666;
  border-radius: 2px;
`;

const PropBody = styled.div`
  height: 265px;
  padding: 12px 0 0 9px;
  display: flex;
  flex-direction: column;

  > label {
    margin-top: 13px;
  }
`;

const AutoButton = styled.button`
  ${fieldSkin}
  height: 28px;
  width: 112px;
  margin: 0 0 14px 233px;
`;

const SliderBlock = styled.div`
  height: 49px;
  padding-left: 2px;

  div {
    display: flex;
    align-items: center;
    justify-content: space-between;
    padding-right: 17px;
  }
`;

const Range = styled.input`
  appearance: none;
  display: block;
  width: 329px;
  height: 18px;
  margin: 5px 0 0 8px;
  background: none;

  &::-webkit-slider-runnable-track {
    height: 18px;
    background: linear-gradient(#757575 0 3px, transparent 3px);
  }
  &::-webkit-slider-thumb {
    appearance: none;
    width: 12px;
    height: 12px;
    margin-top: 5px;
    background: #f0f0f0;
    clip-path: polygon(50% 0, 100% 50%, 100% 100%, 0 100%, 0 50%);
  }
`;

const PropFooter = styled.div`
  height: 32px;
  display: flex;
  padding-left: 175px;
  border-top: 1px solid #424242;
`;

const FootButton = styled.button`
  width: ${({ $on }) => ($on ? 36 : 37)}px;
  flex: none;
  display: grid;
  place-items: center;
  color: ${({ $dim }) => ($dim ? "#8c8c8c" : "inherit")};
  background: ${({ $on }) => ($on ? "#404040" : "none")};
`;

/* ---------- layers ---------- */

const FilterRow = styled.div`
  height: 39px;
  flex: none;
  display: flex;
  align-items: center;
  padding: 7px 0 0 5px;
  border-bottom: 1px solid #424242;
`;

const FilterIcons = styled.div`
  display: flex;
  margin-left: 37px;

  button {
    width: 30px;
    display: grid;
    place-items: center;
  }
`;

const BlendRow = styled.div`
  height: 35px;
  flex: none;
  display: flex;
  align-items: center;
  gap: 8px;
  padding: 3px 0 0 5px;
  border-bottom: 1px solid #424242;

  input {
    margin-left: -2px;
  }
`;

const LockRow = styled.div`
  height: 37px;
  flex: none;
  display: flex;
  align-items: center;
  gap: 6px;
  padding-left: 8px;
`;

const LockIcons = styled.div`
  display: flex;
  margin-right: auto;

  button {
    width: 27px;
    display: grid;
    place-items: center;
  }

  & ~ input {
    margin-right: 9px;
  }
`;

const Dim = styled.button`
  color: #8c8c8c;
`;

const LayerList = styled.div`
  flex: 1;
  min-height: 0;
  overflow: hidden;
`;

const Layer = styled.div`
  height: 52px;
  display: flex;
  border-bottom: 1px solid #424242;
`;

const EyeCell = styled.button`
  width: 38px;
  display: grid;
  place-items: center;
  border-right: 1px solid #424242;
`;

const LayerBody = styled.div`
  flex: 1;
  display: flex;
  align-items: center;
  padding-left: ${({ $plain }) => ($plain ? 5 : 13)}px;
  background: ${({ $on }) => ($on ? "#6a6a6a" : "none")};
  color: #eaeaea;

  span {
    margin-left: 12px;
  }
`;

const LayerIcon = styled.i`
  width: 35px;
`;

const Thumb = styled.i`
  width: 29px;
  height: 40px;
  margin-left: ${({ $checker }) => ($checker ? 0 : 6)}px;
  border: 1px solid #333;
  background: ${({ $checker }) =>
    $checker ? "repeating-conic-gradient(#ccc 0 25%, #fff 0 50%) 0 0 / 8px 8px" : "#fff"};
  position: relative;

  ${({ $on }) =>
    $on &&
    css`
      &::before {
        content: "";
        position: absolute;
        inset: -4px;
        background:
          linear-gradient(#fff, #fff) 0 0 / 12px 1px,
          linear-gradient(#fff, #fff) 100% 0 / 12px 1px,
          linear-gradient(#fff, #fff) 0 100% / 12px 1px,
          linear-gradient(#fff, #fff) 100% 100% / 12px 1px,
          linear-gradient(#fff, #fff) 0 0 / 1px 14px,
          linear-gradient(#fff, #fff) 100% 0 / 1px 14px,
          linear-gradient(#fff, #fff) 0 100% / 1px 14px,
          linear-gradient(#fff, #fff) 100% 100% / 1px 14px;
        background-repeat: no-repeat;
      }
    `};
`;

const LayersFooter = styled.div`
  height: 33px;
  flex: none;
  display: grid;
  grid-template-columns: repeat(7, 34px);
  place-items: center;
  padding-left: 121px;
  border-top: 1px solid #424242;
`;

const Fx = styled.em`
  font-size: 15px;
`;

/* ---------- taskbar ---------- */

const TaskStrip = styled.footer`
  height: 26px;
  flex: none;
  display: flex;
  align-items: flex-start;
  overflow: hidden;
  background: linear-gradient(90deg, #22373f, #22363f 55%, #1a2744);
`;

const StartButton = styled.button`
  width: 41px;
  height: 48px;
  display: flex;
  align-items: center;
`;

const SearchBox = styled.div`
  width: 361px;
  height: 48px;
  display: flex;
  align-items: center;
  padding-left: 20px;
  background: #f2f2f2;
  flex: none;

  input {
    flex: 1;
    min-width: 0;
    height: 48px;
    padding: 3px 0 0 10px;
    border: 0;
    background: none;
    font-size: 17px;
    line-height: 24px;
  }
  input::placeholder {
    color: #333;
  }
`;

const TaskButton = styled.button`
  width: 62px;
  height: 48px;
  flex: none;
  display: grid;
  place-items: center;
  background: ${({ $on }) => ($on ? "#4f616a" : "none")};
`;

const AppTile = styled.b`
  width: 28px;
  height: 28px;
  border-radius: 5px;
  background: ${({ $bg }) => $bg};
  color: ${({ $fg }) => $fg};
  font-size: 14px;
  line-height: 24px;
`;

const TrayArea = styled.div`
  margin-left: auto;
  margin-right: -30px;
  height: 48px;
  display: grid;
  grid-template-columns: repeat(6, 40px) 56px 74px 56px;
  place-items: center;
  color: #fff;

  time {
    padding-bottom: 20px;
    font-size: 14px;
  }
`;
